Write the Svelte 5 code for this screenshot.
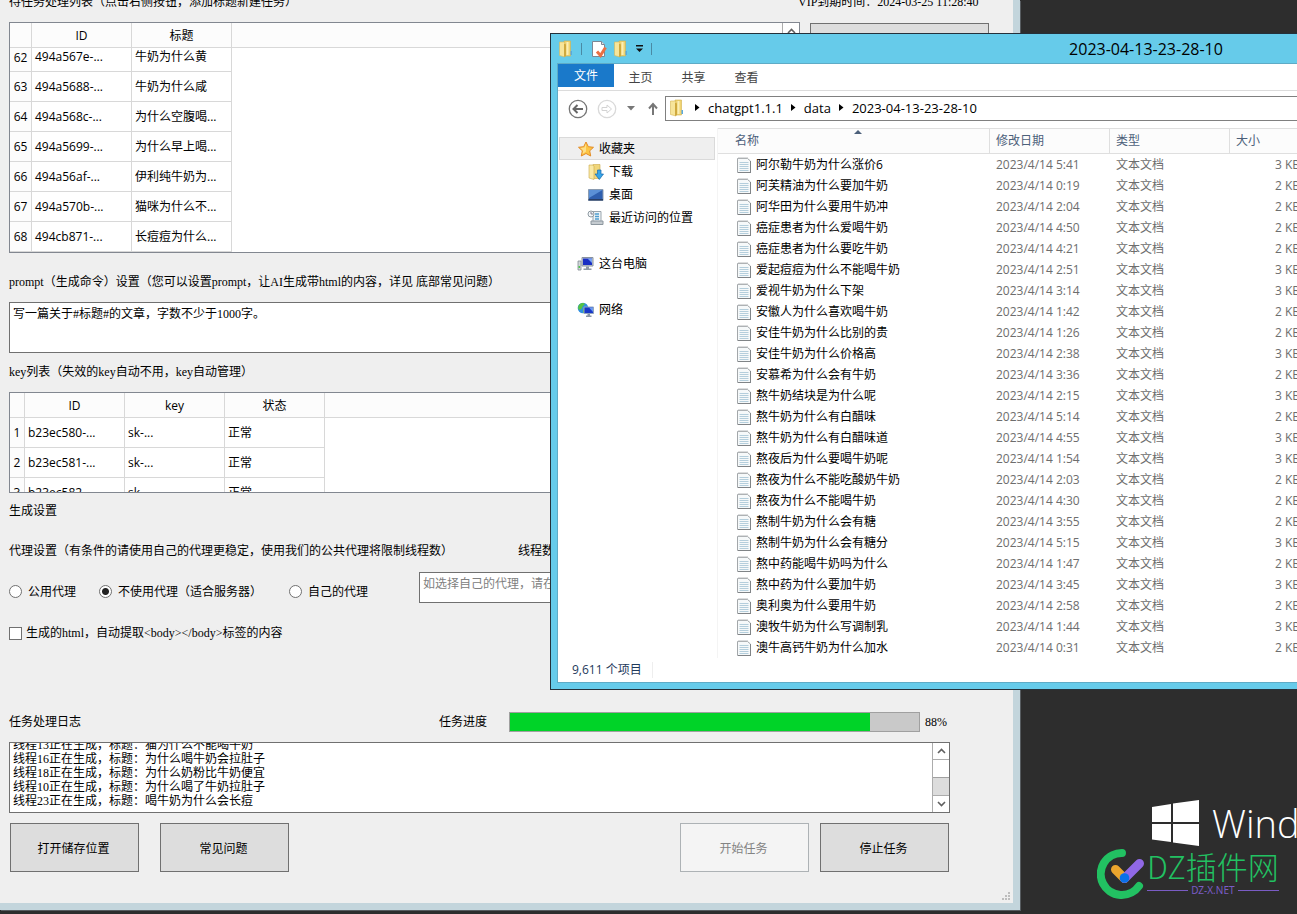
<script lang="ts">
	const tasks = [
		{ no: 62, id: '494a567e-...', title: '牛奶为什么黄' },
		{ no: 63, id: '494a5688-...', title: '牛奶为什么咸' },
		{ no: 64, id: '494a568c-...', title: '为什么空腹喝...' },
		{ no: 65, id: '494a5699-...', title: '为什么早上喝...' },
		{ no: 66, id: '494a56af-...', title: '伊利纯牛奶为...' },
		{ no: 67, id: '494a570b-...', title: '猫咪为什么不...' },
		{ no: 68, id: '494cb871-...', title: '长痘痘为什么...' }
	];

	const keys = ['b23ec580-...', 'b23ec581-...', 'b23ec582-...'];

	const logs = [
		'线程13正在生成，标题：猫为什么不能喝牛奶',
		'线程16正在生成，标题：为什么喝牛奶会拉肚子',
		'线程18正在生成，标题：为什么奶粉比牛奶便宜',
		'线程10正在生成，标题：为什么喝了牛奶拉肚子',
		'线程23正在生成，标题：喝牛奶为什么会长痘'
	];

	// [name, time on 2023/4/14, size in KB]
	const files: Array<[string, string, number]> = [
		['阿尔勒牛奶为什么涨价6', '5:41', 3],
		['阿芙精油为什么要加牛奶', '0:19', 2],
		['阿华田为什么要用牛奶冲', '2:04', 2],
		['癌症患者为什么爱喝牛奶', '4:50', 2],
		['癌症患者为什么要吃牛奶', '4:21', 2],
		['爱起痘痘为什么不能喝牛奶', '2:51', 3],
		['爱视牛奶为什么下架', '3:14', 3],
		['安徽人为什么喜欢喝牛奶', '1:42', 2],
		['安佳牛奶为什么比别的贵', '1:26', 2],
		['安佳牛奶为什么价格高', '2:38', 3],
		['安慕希为什么会有牛奶', '3:36', 2],
		['熬牛奶结块是为什么呢', '2:15', 3],
		['熬牛奶为什么有白醋味', '5:14', 2],
		['熬牛奶为什么有白醋味道', '4:55', 3],
		['熬夜后为什么要喝牛奶呢', '1:54', 3],
		['熬夜为什么不能吃酸奶牛奶', '2:03', 2],
		['熬夜为什么不能喝牛奶', '4:30', 2],
		['熬制牛奶为什么会有糖', '3:55', 2],
		['熬制牛奶为什么会有糖分', '5:15', 3],
		['熬中药能喝牛奶吗为什么', '1:47', 2],
		['熬中药为什么要加牛奶', '3:45', 3],
		['奥利奥为什么要用牛奶', '2:58', 2],
		['澳牧牛奶为什么写调制乳', '1:44', 3],
		['澳牛高钙牛奶为什么加水', '0:31', 2]
	];

	const crumbs = ['chatgpt1.1.1', 'data', '2023-04-13-23-28-10'];
	const tabs = ['主页', '共享', '查看'];

	let prompt = $state('写一篇关于#标题#的文章，字数不少于1000字。');
	let proxy = $state('none');
	let stripBody = $state(false);
	let progress = $state(88);
</script>

{#snippet folder()}
	<svg class="icon" width="16" height="18" viewBox="0 0 16 18" aria-hidden="true">
		<path d="M6 1h6.500v15H6z" fill="#f0d472" stroke="#d2b04c" stroke-width=".6" />
		<path d="M1.500 2h4.500l1 1v14l-5.500-1.500z" fill="#f7e59a" stroke="#d6b755" stroke-width=".6" />
		<path d="M6 3.500l2 1V16l-2 1z" fill="#cfa93e" />
		<path d="M8.500 2h2v13h-2z" fill="#fbeeb5" />
		<path d="M12.500 11H14v4h-1.500z" fill="#5aa9dd" />
	</svg>
{/snippet}

{#snippet arrow(down: boolean)}
	<svg width="9" height="6" viewBox="0 0 9 6" aria-hidden="true">
		<path d={down ? 'M1 1l3.500 3.500L8 1' : 'M1 5l3.500-3.500L8 5'} fill="none" stroke="#606060" stroke-width="1.600" />
	</svg>
{/snippet}

<div class="desktop">
	<main class="app">
		<div class="form">
			<div class="top-line">
				<span>待任务处理列表（点击右侧按钮，添加标题新建任务）</span>
				<span class="vip">VIP到期时间：2024-03-25 11:28:40</span>
			</div>

			<div class="task-row">
				<div class="grid-box task-box">
					<table class="grid">
						<thead>
							<tr><th class="no"></th><th class="col">ID</th><th class="col">标题</th><th class="rest"></th></tr>
						</thead>
						<tbody>
							{#each tasks as task, i}
								<tr class:partial={i === 0}>
									<th>{task.no}</th>
									<td>{task.id}</td>
									<td>{task.title}</td>
									<td class="rest"></td>
								</tr>
							{/each}
						</tbody>
					</table>
					<div class="scrollbar">
						<button aria-label="向上滚动">{@render arrow(false)}</button>
						<span class="track"></span>
						<button aria-label="向下滚动">{@render arrow(true)}</button>
					</div>
				</div>
				<button class="btn add">导入标题（新建任务）</button>
			</div>

			<div class="body">
				<label class="prompt-label" for="prompt">prompt（生成命令）设置（您可以设置prompt，让AI生成带html的内容，详见 底部常见问题）</label>
				<textarea id="prompt" class="prompt" bind:value={prompt}></textarea>

				<p class="key-label">key列表（失效的key自动不用，key自动管理）</p>
				<div class="grid-box key-box">
					<table class="grid">
						<thead>
							<tr><th class="no"></th><th class="col">ID</th><th class="col">key</th><th class="col">状态</th><th class="rest"></th></tr>
						</thead>
						<tbody>
							{#each keys as key, i}
								<tr>
									<th>{i + 1}</th>
									<td>{key}</td>
									<td>sk-...</td>
									<td>正常</td>
									<td class="rest"></td>
								</tr>
							{/each}
						</tbody>
					</table>
				</div>

				<p class="settings-label">生成设置</p>
				<div class="proxy-head">
					<span>代理设置（有条件的请使用自己的代理更稳定，使用我们的公共代理将限制线程数）</span>
					<span>线程数</span>
				</div>

				<div class="proxy-row">
					<label class="w90"><input type="radio" value="public" bind:group={proxy} />公用代理</label>
					<label class="w190"><input type="radio" value="none" bind:group={proxy} />不使用代理（适合服务器）</label>
					<label class="w130"><input type="radio" value="own" bind:group={proxy} />自己的代理</label>
					<textarea class="proxy-input" aria-label="代理地址" placeholder="如选择自己的代理，请在此处填写代理地址"></textarea>
				</div>

				<label class="strip"><input type="checkbox" bind:checked={stripBody} />生成的html，自动提取&lt;body&gt;&lt;/body&gt;标签的内容</label>

				<div class="progress-row">
					<span class="log-label">任务处理日志</span>
					<label class="progress-label" for="progress">任务进度</label>
					<progress id="progress" max="100" value={progress}></progress>
					<span class="percent">{progress}%</span>
				</div>

				<div class="log-box">
					<div class="log" role="log">
						{#each logs as line}
							<div class="log-line">{line}</div>
						{/each}
					</div>
					<div class="scrollbar">
						<button aria-label="向上滚动">{@render arrow(false)}</button>
						<span class="track"></span>
						<span class="thumb"></span>
						<button aria-label="向下滚动">{@render arrow(true)}</button>
					</div>
				</div>

				<div class="actions">
					<button class="btn">打开储存位置</button>
					<button class="btn">常见问题</button>
					<span class="spacer"></span>
					<button class="btn" disabled>开始任务</button>
					<button class="btn stop">停止任务</button>
				</div>
			</div>
		</div>
		<svg class="grip" width="9" height="9" viewBox="0 0 9 9" aria-hidden="true">
			<path d="M6 0h2v2H6zM3 3h2v2H3zM6 3h2v2H6zM0 6h2v2H0zM3 6h2v2H3zM6 6h2v2H6z" fill="#bdbdbd" />
		</svg>
	</main>

	<aside class="wallpaper">
		<div class="brand">
			<svg width="47" height="46" viewBox="0 0 47 46" aria-hidden="true">
				<path d="M0 7l19-3v18H0zM21 3.500L47 0v22H21zM0 24h19v18L0 39.500zM21 24h26v22l-26-3.500z" fill="#fff" />
			</svg>
			<span>Windows</span>
		</div>
		<div class="mark">
			<svg width="48" height="52" viewBox="0 0 48 52" aria-hidden="true">
				<path d="M25 5A21 21 0 1 0 42 38" fill="none" stroke="#22c162" stroke-width="8" stroke-linecap="round" />
				<path d="M18.500 21.500l9 9" stroke="#eba52d" stroke-width="9" stroke-linecap="round" />
				<path d="M27.500 30.500L42.500 15.500" stroke="#9068e6" stroke-width="9" stroke-linecap="round" />
				<circle cx="27.500" cy="30" r="4.800" fill="#0a71e8" />
			</svg>
			<div class="mark-text">
				<strong>DZ插件网</strong>
				<small>DZ-X.NET</small>
			</div>
		</div>
	</aside>

	<section class="explorer">
		<header class="titlebar">
			<div class="quick">
				{@render folder()}
				<i class="sep"></i>
				<svg class="icon" width="16" height="18" viewBox="0 0 16 18" aria-hidden="true">
					<path d="M1.500 1.500h9l3 3v12h-12z" fill="#fff" stroke="#7c8794" />
					<path d="M10.500 1.500v3h3" fill="#dfe5ea" stroke="#7c8794" />
					<path d="M6 11.500l3.500 4 5-8" fill="none" stroke="#ea7044" stroke-width="3" />
				</svg>
				{@render folder()}
				<svg class="more" width="9" height="8" viewBox="0 0 9 8" aria-hidden="true">
					<path d="M1 0h7v1.500H1zM1 3.500h7L4.500 7z" fill="#111" />
				</svg>
				<i class="sep"></i>
			</div>
			<h1>2023-04-13-23-28-10</h1>
		</header>

		<div class="pane">
			<nav class="tabs">
				<button class="file-tab">文件</button>
				{#each tabs as tab}
					<button>{tab}</button>
				{/each}
			</nav>

			<div class="navbar">
				<button aria-label="后退">
					<svg width="20" height="20" viewBox="0 0 20 20">
						<circle cx="10" cy="10" r="8.700" fill="none" stroke="#757575" stroke-width="1.300" />
						<path d="M15 10H6M9.500 6L5.500 10l4 4" fill="none" stroke="#666" stroke-width="2" />
					</svg>
				</button>
				<button class="forward" aria-label="前进">
					<svg width="20" height="20" viewBox="0 0 20 20">
						<circle cx="10" cy="10" r="8.700" fill="none" stroke="#d9d9d9" stroke-width="1.300" />
						<path d="M5 8.500h5V6l4.500 4-4.500 4v-2.500H5z" fill="none" stroke="#d3d3d3" />
					</svg>
				</button>
				<button class="history" aria-label="最近浏览的位置">
					<svg width="8" height="5" viewBox="0 0 8 5"><path d="M0 0h8L4 4.500z" fill="#777" /></svg>
				</button>
				<button class="up" aria-label="上移">
					<svg width="10" height="14" viewBox="0 0 10 14">
						<path d="M5 13V3M1 6.500L5 2l4 4.500" fill="none" stroke="#777" stroke-width="2" />
					</svg>
				</button>
				<div class="address">
					{@render folder()}
					{#each crumbs as crumb}
						<svg class="chev" width="5" height="7" viewBox="0 0 5 7" aria-hidden="true"><path d="M0 0l4.500 3.500L0 7z" fill="#000" /></svg>
						<a href="#top">{crumb}</a>
					{/each}
				</div>
			</div>

			<div class="columns">
				<ul class="tree">
					<li class="selected">
						<svg width="18" height="16" viewBox="0 0 18 16" aria-hidden="true">
							<path d="M9 1l2.300 4.700 5.200.6-3.800 3.500 1 5.200L9 12.500 4.300 15l1-5.200L1.500 6.300l5.200-.6z" fill="#fcc544" stroke="#e38b26" />
							<path d="M9 2.500v8L5.500 13l.8-3.500L3.500 7l4-.6z" fill="#fde08a" />
						</svg>收藏夹
					</li>
					<li class="child">
						<svg width="18" height="16" viewBox="0 0 18 16" aria-hidden="true">
							<path d="M6 .5h7v14H6z" fill="#f0d67a" stroke="#cba748" stroke-width=".6" />
							<path d="M2 1h4l1 1.500v13L2 14z" fill="#f9e9a6" stroke="#cba748" stroke-width=".6" />
							<path d="M10.500 6h3.500v4h2.500l-4.200 5.500L8 10h2.500z" fill="#36a5e8" stroke="#1769ad" stroke-width=".7" />
						</svg>下载
					</li>
					<li class="child">
						<svg width="18" height="16" viewBox="0 0 18 16" aria-hidden="true">
							<path d="M1.500 2.500h14.500v11H1.500z" fill="#2f5fae" stroke="#8a9bb0" />
							<path d="M2 3h13.500L2 11z" fill="#5b90d6" />
							<path d="M1.500 12h14.500v1.500H1.500z" fill="#2a3f66" />
						</svg>桌面
					</li>
					<li class="child">
						<svg width="18" height="16" viewBox="0 0 18 16" aria-hidden="true">
							<path d="M6 1.500h8v10H6z" fill="#edf3f7" stroke="#9aa5ad" />
							<path d="M8 4h4M8 6.500h4M8 9h4" stroke="#4f9ecf" stroke-width="1.400" />
							<path d="M4 11h12v3.500H4z" fill="#c5cbd0" stroke="#8c969e" />
							<circle cx="4" cy="4" r="3" fill="#f3f6f8" stroke="#8f9aa2" />
							<path d="M4 2v2h2" fill="none" stroke="#667" stroke-width=".8" />
						</svg>最近访问的位置
					</li>
					<li class="root">
						<svg width="18" height="16" viewBox="0 0 18 16" aria-hidden="true">
							<path d="M1 5h3v9H1z" fill="#d2d7db" stroke="#818a92" stroke-width=".8" />
							<path d="M1.500 10h1.500v2H1.500z" fill="#4ec24e" />
							<path d="M5 1.500h11v8.500H5z" fill="#c8cfd8" stroke="#88929e" />
							<path d="M6 2.500h9V9H6z" fill="#1a2fc4" />
							<path d="M10.500 2.500H15V7z" fill="#7aa4f2" />
							<path d="M9 10.500h3v2h2.500V14h-8v-1.500H9z" fill="#8f9aa6" />
						</svg>这台电脑
					</li>
					<li class="root">
						<svg width="18" height="16" viewBox="0 0 18 16" aria-hidden="true">
							<circle cx="6" cy="6" r="5.300" fill="#2f8fe0" />
							<path d="M2 3c2-2.500 5-2.500 6-1L6 4 4.500 7 2 8C.5 6 1 4.500 2 3zM6 7l3 1-1 3H6z" fill="#56c244" />
							<path d="M7 5h9.500v6.500H7z" fill="#1836c8" stroke="#93a5bd" />
							<path d="M12 5.500h4V10z" fill="#6c9cf0" />
							<path d="M10.500 12h2.500v1.500h1.500V15H9v-1.500h1.500z" fill="#8996a6" />
						</svg>网络
					</li>
				</ul>

				<div class="list">
					<table class="files">
						<thead>
							<tr>
								<th class="name">名称<i class="sort"></i></th>
								<th class="date">修改日期</th>
								<th class="type">类型</th>
								<th class="size">大小</th>
								<th></th>
							</tr>
						</thead>
						<tbody>
							{#each files as [name, time, size]}
								<tr>
									<td class="name">
										<span class="file">
											<svg width="14" height="17" viewBox="0 0 14 17" aria-hidden="true">
												<path d="M.5 2.500h10l3 2.500v11.500H.5z" fill="#f6f9fa" stroke="#a3a7aa" />
												<path d="M2.500 6.500h9M2.500 8.500h9M2.500 10.500h9M2.500 12.500h9M2.500 14.500h9" stroke="#b4cedc" />
												<path d="M1 16.500h13M13.500 5v12" stroke="#808487" />
												<path d="M2 3V1M4 3V1M6 3V1M8 3V1M10 3V1" stroke="#b9bcbe" />
											</svg>{name}
										</span>
									</td>
									<td>2023/4/14 {time}</td>
									<td>文本文档</td>
									<td class="kb">{size} KB</td>
									<td></td>
								</tr>
							{/each}
						</tbody>
					</table>
				</div>
			</div>

			<footer class="status"><span>9,611 个项目</span></footer>
		</div>
	</section>
</div>

<style>
	:global(body) {
		margin: 0;
		background: #2d2d2d;
	}

	.desktop {
		--ui: 'Open Sans', 'Noto Sans CJK SC', sans-serif;
		--song: 'Liberation Serif', 'Noto Sans CJK SC', serif;
		position: relative;
		display: flex;
		align-items: flex-start;
		min-height: 100vh;
		overflow: hidden;
		background: #2d2d2d;
		color: #000;
		font: 12px/14px var(--song);
	}

	.desktop * {
		box-sizing: border-box;
	}

	button,
	textarea,
	input {
		margin: 0;
		padding: 0;
		font: inherit;
		color: inherit;
		border-radius: 0;
	}

	p,
	h1,
	ul {
		margin: 0;
		padding: 0;
		list-style: none;
	}

	svg {
		display: block;
		flex: none;
	}

	/* Task window */
	.app {
		position: relative;
		flex: 1;
		min-width: 0;
		background: #efefef;
		border: solid #c3d5dc;
		border-width: 0 7px 7px 0;
		box-shadow: 1px 1px 0 #575c60;
	}

	.form {
		padding: 0 24px 31px 9px;
		white-space: nowrap;
	}

	.top-line {
		display: flex;
		justify-content: space-between;
		margin: -5px 0 13px;
	}

	.vip {
		width: 191px;
	}

	.task-row {
		display: flex;
		align-items: flex-start;
		gap: 10px;
	}

	.grid-box {
		display: flex;
		overflow: hidden;
		background: #fff;
		border: 1px solid #828790;
	}

	.task-box {
		flex: 1;
		height: 231px;
	}

	.key-box {
		height: 101px;
	}

	.grid {
		flex: 1;
		align-self: flex-start;
		table-layout: fixed;
		width: 100%;
		border-spacing: 0;
		font: 12px/16px var(--ui);
	}

	.grid th,
	.grid td {
		height: 30px;
		padding: 0 3px;
		border: solid #d8d8d8;
		border-width: 0 1px 1px 0;
		font-weight: 400;
		text-align: left;
	}

	.grid th {
		padding: 1px 0 0;
		background: #fcfcfc;
		text-align: center;
	}

	.grid thead th {
		height: 25px;
	}

	.grid .no {
		width: 22px;
	}

	.key-box .no {
		width: 15px;
	}

	.grid .col {
		width: 100px;
	}

	.grid .rest {
		border-right: 0;
	}

	.grid td.rest {
		border-bottom: 0;
	}

	.grid .partial th,
	.grid .partial td {
		height: 24px;
		padding-bottom: 5px;
	}

	.scrollbar {
		display: flex;
		flex: none;
		flex-direction: column;
		width: 17px;
		background: #fff;
		border-left: 1px solid #acacac;
	}

	.scrollbar button {
		display: flex;
		align-items: center;
		justify-content: center;
		height: 17px;
		padding: 0;
		background: #fff;
		border: solid #acacac;
		border-width: 0 0 1px;
	}

	.scrollbar button:last-child {
		border-width: 1px 0 0;
	}

	.track {
		flex: 1;
	}

	.thumb {
		height: 18px;
		background: #dcdcdc;
		border-top: 1px solid #a0a0a0;
	}

	.btn {
		width: 129px;
		height: 49px;
		padding: 2px 2px 0 0;
		background: #ddd;
		border: 1px solid #707070;
	}

	.btn:disabled {
		color: #838383;
		background: #f4f4f4;
		border-color: #adb2b5;
	}

	.btn.add {
		width: 179px;
		height: 31px;
		margin-top: 1px;
	}

	.body {
		display: flex;
		flex-direction: column;
		margin-right: 39px;
	}

	.prompt-label {
		margin: 22px 0 13px;
	}

	textarea {
		display: block;
		resize: none;
		overflow: hidden;
		background: #fff;
		border: 1px solid #707070;
		outline: none;
	}

	.prompt {
		height: 51px;
		padding: 4px 3px;
	}

	.key-label {
		margin: 12px 0 13px;
	}

	.settings-label {
		margin: 11px 0 26px;
	}

	.proxy-head {
		display: grid;
		grid-template-columns: 509px 1fr;
		margin-bottom: 14px;
	}

	.proxy-row {
		display: flex;
		height: 31px;
		margin-bottom: 23px;
	}

	.proxy-row label,
	.strip {
		display: flex;
		align-items: center;
		gap: 6px;
	}

	.proxy-row label {
		padding-top: 8px;
	}

	.w90 {
		width: 90px;
	}

	.w190 {
		width: 190px;
	}

	.w130 {
		width: 130px;
	}

	.proxy-input {
		flex: 1;
		height: 31px;
		padding: 4px 3px;
	}

	.proxy-input::placeholder {
		color: #808080;
	}

	input {
		appearance: none;
		width: 13px;
		height: 13px;
		background: #fff;
		border: 1px solid #707070;
	}

	input[type='radio'] {
		border-radius: 50%;
	}

	input[type='radio']:checked {
		background: radial-gradient(#222 0 3px, #fff 4px);
	}

	.strip {
		gap: 4px;
	}

	.progress-row {
		display: flex;
		align-items: center;
		margin: 72px 0 10px;
	}

	.log-label {
		width: 430px;
	}

	.progress-label {
		width: 70px;
	}

	progress {
		flex: 1;
		appearance: none;
		height: 20px;
		border: 1px solid #a0a0a0;
		background: #c9c9c9;
	}

	progress::-webkit-progress-bar {
		background: #c9c9c9;
	}

	progress::-webkit-progress-value {
		background: #00d328;
	}

	.percent {
		width: 30px;
		padding-left: 5px;
	}

	.log-box {
		display: flex;
		height: 71px;
		background: #fff;
		border: 1px solid #707070;
	}

	.log {
		display: flex;
		flex: 1;
		flex-direction: column;
		justify-content: flex-end;
		overflow: hidden;
		padding: 0 3px 4px;
	}

	.log-line {
		flex: none;
	}

	.actions {
		display: flex;
		gap: 21px;
		margin-top: 10px;
		padding: 0 1px;
	}

	.spacer {
		flex: 1;
	}

	.stop {
		margin-left: -10px;
	}

	.grip {
		position: absolute;
		right: 2px;
		bottom: 2px;
	}

	/* Wallpaper */
	.wallpaper {
		display: flex;
		flex: none;
		flex-direction: column;
		justify-content: flex-end;
		align-self: stretch;
		width: 277px;
		padding-bottom: 14px;
		overflow: hidden;
	}

	.brand {
		display: flex;
		align-items: center;
		gap: 13px;
		height: 46px;
		margin: 0 0 2px 132px;
		color: #fff;
		font: 300 38px/46px 'Open Sans', sans-serif;
	}

	.mark {
		display: flex;
		margin-left: 77px;
	}

	.mark-text {
		display: flex;
		flex-direction: column;
		padding-left: 2px;
	}

	.mark-text strong {
		color: #22c162;
		font: 300 31px/36px 'Noto Sans CJK SC', sans-serif;
	}

	.mark-text small {
		display: flex;
		align-items: center;
		gap: 3px;
		color: #7a5cc4;
		font: 10px/12px 'Noto Sans', sans-serif;
	}

	.mark-text small::before,
	.mark-text small::after {
		content: '';
		flex: 1;
		height: 1px;
		background: #7a5cc4;
	}

	/* Explorer window */
	.explorer {
		position: absolute;
		top: 33px;
		left: 550px;
		right: -445px;
		padding: 0 7px 7px;
		background: #66cbea;
		border: 1px solid #24303a;
		font: 12px/16px var(--ui);
		white-space: nowrap;
	}

	.explorer button {
		padding: 0;
		background: none;
		border: 0;
	}

	.titlebar {
		display: grid;
		grid-template-columns: 1fr auto 1fr;
		align-items: center;
		height: 30px;
	}

	.quick {
		display: flex;
		align-items: center;
	}

	.sep {
		width: 1px;
		height: 12px;
		margin: 0 9px 0 7px;
		background: #4a8aa4;
	}

	.quick .icon + .icon {
		margin-left: 6px;
	}

	.more {
		margin-left: 6px;
	}

	.titlebar h1 {
		font: 400 16px/20px var(--ui);
	}

	.pane {
		background: #fff;
		box-shadow: 0 0 0 1px #5fabc6;
	}

	.tabs {
		display: flex;
		height: 27px;
		border-bottom: 1px solid #dcdcdc;
		color: #444;
	}

	.tabs button {
		width: 53px;
		height: 26px;
		padding-top: 1px;
	}

	.tabs .file-tab {
		width: 56px;
		height: 23px;
		color: #fff;
		background: #1a79ca;
	}

	.navbar {
		display: flex;
		align-items: center;
		height: 35px;
		padding-left: 10px;
	}

	.forward {
		margin-left: 9px;
	}

	.history {
		margin-left: 10px;
	}

	.up {
		margin: 0 7px 0 13px;
	}

	.address {
		display: flex;
		flex: 1;
		align-items: center;
		height: 25px;
		padding: 0 0 2px 3px;
		border: 1px solid #808080;
		font: 13px/16px var(--ui);
	}

	.address .icon {
		margin-right: 2px;
	}

	.chev {
		margin: 0 8px;
	}

	.address a {
		color: #000;
		text-decoration: none;
	}

	.columns {
		display: flex;
		padding-top: 2px;
	}

	.tree {
		flex: none;
		width: 160px;
		padding: 9px 2px 0 1px;
		border-right: 1px solid #f4f4f4;
	}

	.tree li {
		display: flex;
		align-items: center;
		gap: 4px;
		height: 23px;
		padding-left: 18px;
	}

	.tree .selected {
		padding-left: 17px;
		background: #efefef;
		border: 1px solid #dadada;
	}

	.tree .child {
		padding-left: 28px;
	}

	.tree .root {
		margin-top: 23px;
	}

	.list {
		flex: 1;
		min-width: 0;
	}

	.files {
		table-layout: fixed;
		width: 100%;
		border-spacing: 0;
	}

	.files th {
		height: 26px;
		padding: 0 6px;
		background: #fcfcfc;
		border: solid #dfdfdf;
		border-width: 1px 1px 1px 0;
		color: #4c607a;
		font-weight: 400;
		text-align: left;
	}

	.files td {
		height: 21px;
		padding: 0 6px;
		color: #6d6d6d;
	}

	.files th.name {
		position: relative;
		width: 272px;
		padding-left: 17px;
	}

	.files td.name {
		padding-left: 19px;
		color: #000;
	}

	.date,
	.type,
	.size {
		width: 120px;
	}

	.files .size {
		width: 80px;
	}

	.files .kb {
		padding-right: 10px;
		text-align: right;
	}

	.sort {
		position: absolute;
		top: 1px;
		left: 50%;
		border: 4px solid transparent;
		border-top: 0;
		border-bottom-color: #4c607a;
	}

	.file {
		display: flex;
		align-items: center;
		gap: 5px;
	}

	.status {
		display: flex;
		align-items: center;
		height: 24px;
		padding-left: 14px;
		color: #1e395b;
	}

	.status span {
		padding-right: 10px;
		border-right: 1px solid #eee;
	}
</style>
